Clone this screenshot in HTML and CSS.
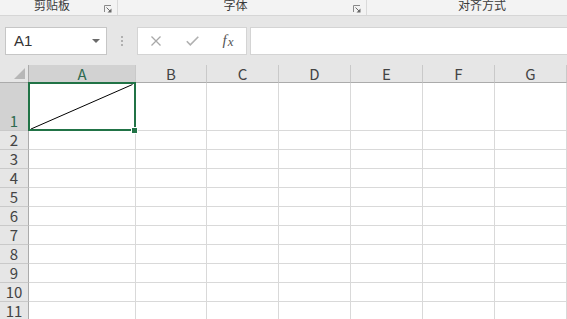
FILE: index.html
```html
<!DOCTYPE html>
<html lang="zh-CN">

<head>
    <meta charset="UTF-8">
    <meta name="viewport" content="width=device-width, initial-scale=1.0">
    <title>工作簿1 - Excel</title>
    <link rel="stylesheet" href="styles.css">
</head>

<body>
    <!-- Ribbon group labels (bottom of the ribbon) -->
    <div class="ribbon">
        <div class="group group-clip">
            <span class="group-label">剪贴板</span>
            <svg class="launcher" viewBox="0 0 8 8"><path d="M0.5 7V0.5H7" fill="none" stroke="#8a8a8a"/><path d="M2.5 2.5L6 6" stroke="#6a6a6a"/><path d="M7.5 3.5V7.5H3.5Z" fill="#6a6a6a"/></svg>
        </div>
        <div class="group group-font">
            <span class="group-label">字体</span>
            <svg class="launcher" viewBox="0 0 8 8"><path d="M0.5 7V0.5H7" fill="none" stroke="#8a8a8a"/><path d="M2.5 2.5L6 6" stroke="#6a6a6a"/><path d="M7.5 3.5V7.5H3.5Z" fill="#6a6a6a"/></svg>
        </div>
        <div class="group group-align">
            <span class="group-label">对齐方式</span>
        </div>
    </div>

    <!-- Name box + formula bar -->
    <div class="formula-bar">
        <div class="name-box">
            <span>A1</span>
            <svg class="drop" viewBox="0 0 8 4"><path d="M0 0H8L4 4Z" fill="#6a6a6a"/></svg>
        </div>
        <div class="grip">
            <svg viewBox="0 0 2 10" width="2" height="10"><rect x="0" y="0" width="2" height="2" fill="#b0b0b0"/><rect x="0" y="4" width="2" height="2" fill="#b0b0b0"/><rect x="0" y="8" width="2" height="2" fill="#b0b0b0"/></svg>
        </div>
        <div class="fx-buttons">
            <span class="fx-btn"><svg viewBox="0 0 10 10" width="10" height="10"><path d="M0.5 0.5L9.5 9.5M9.5 0.5L0.5 9.5" stroke="#a8a8a8" stroke-width="1.3"/></svg></span>
            <span class="fx-btn"><svg viewBox="0 0 13 10" width="13" height="10"><path d="M0.8 5.2L4.3 8.8L12.3 0.8" fill="none" stroke="#b0b0b0" stroke-width="1.6"/></svg></span>
            <span class="fx-btn fx-label"><i>f</i><i class="x">x</i></span>
        </div>
        <div class="formula-input"></div>
    </div>

    <!-- Worksheet -->
    <div class="sheet">
        <div class="row head-row">
            <div class="corner"><svg viewBox="0 0 11 11" width="11" height="11"><path d="M11 0V11H0Z" fill="#b7b7b7"/></svg></div>
            <div class="ch selected">A</div>
            <div class="ch">B</div>
            <div class="ch">C</div>
            <div class="ch">D</div>
            <div class="ch">E</div>
            <div class="ch">F</div>
            <div class="ch">G</div>
            <div class="ch">H</div>
        </div>
        <div class="row row-tall">
            <div class="rh selected">1</div>
            <div class="c active">
                <svg class="diag" viewBox="0 0 106 47" preserveAspectRatio="none"><line x1="2" y1="46" x2="103.5" y2="1.5" stroke="#000" stroke-width="1"/></svg>
                <div class="sel"><span class="handle"></span></div>
            </div>
            <div class="c"></div><div class="c"></div><div class="c"></div><div class="c"></div><div class="c"></div><div class="c"></div><div class="c"></div>
        </div>
        <div class="row"><div class="rh">2</div><div class="c"></div><div class="c"></div><div class="c"></div><div class="c"></div><div class="c"></div><div class="c"></div><div class="c"></div><div class="c"></div></div>
        <div class="row"><div class="rh">3</div><div class="c"></div><div class="c"></div><div class="c"></div><div class="c"></div><div class="c"></div><div class="c"></div><div class="c"></div><div class="c"></div></div>
        <div class="row"><div class="rh">4</div><div class="c"></div><div class="c"></div><div class="c"></div><div class="c"></div><div class="c"></div><div class="c"></div><div class="c"></div><div class="c"></div></div>
        <div class="row"><div class="rh">5</div><div class="c"></div><div class="c"></div><div class="c"></div><div class="c"></div><div class="c"></div><div class="c"></div><div class="c"></div><div class="c"></div></div>
        <div class="row"><div class="rh">6</div><div class="c"></div><div class="c"></div><div class="c"></div><div class="c"></div><div class="c"></div><div class="c"></div><div class="c"></div><div class="c"></div></div>
        <div class="row"><div class="rh">7</div><div class="c"></div><div class="c"></div><div class="c"></div><div class="c"></div><div class="c"></div><div class="c"></div><div class="c"></div><div class="c"></div></div>
        <div class="row"><div class="rh">8</div><div class="c"></div><div class="c"></div><div class="c"></div><div class="c"></div><div class="c"></div><div class="c"></div><div class="c"></div><div class="c"></div></div>
        <div class="row"><div class="rh">9</div><div class="c"></div><div class="c"></div><div class="c"></div><div class="c"></div><div class="c"></div><div class="c"></div><div class="c"></div><div class="c"></div></div>
        <div class="row"><div class="rh">10</div><div class="c"></div><div class="c"></div><div class="c"></div><div class="c"></div><div class="c"></div><div class="c"></div><div class="c"></div><div class="c"></div></div>
        <div class="row"><div class="rh">11</div><div class="c"></div><div class="c"></div><div class="c"></div><div class="c"></div><div class="c"></div><div class="c"></div><div class="c"></div><div class="c"></div></div>
        <div class="row"><div class="rh">12</div><div class="c"></div><div class="c"></div><div class="c"></div><div class="c"></div><div class="c"></div><div class="c"></div><div class="c"></div><div class="c"></div></div>
    </div>
</body>

</html>
```
FILE: styles.css
```css
* {
    box-sizing: border-box;
    margin: 0;
    padding: 0;
}

body {
    width: 567px;
    height: 319px;
    overflow: hidden;
    font-family: 'Noto Sans CJK SC', 'Liberation Sans', sans-serif;
    background-color: #fff;
    color: #444;
}

/* Ribbon */
.ribbon {
    display: flex;
    height: 16px;
    background-color: #f3f3f3;
    border-bottom: 1px solid #d6d6d6;
    overflow: hidden;
}

.group {
    display: flex;
    align-items: flex-start;
    flex-shrink: 0;
    border-right: 1px solid #dadada;
}

.group-clip {
    width: 118px;
}

.group-font {
    width: 249px;
}

.group-align {
    width: 230px;
    border-right: none;
}

.group-label {
    flex: 1;
    text-align: center;
    font-size: 12px;
    line-height: 9px;
    color: #3a3a3a;
}

.launcher {
    width: 8px;
    height: 8px;
    margin: 5px 5px 0 0;
}

/* Formula bar */
.formula-bar {
    display: flex;
    align-items: center;
    height: 49px;
    padding-left: 5px;
    background-color: #e6e6e6;
}

.name-box {
    display: flex;
    align-items: center;
    justify-content: space-between;
    width: 102px;
    height: 28px;
    padding: 0 6px 0 8px;
    background-color: #fff;
    border: 1px solid #c6c6c6;
    font-family: 'Liberation Sans', sans-serif;
    font-size: 15px;
    color: #333;
}

.drop {
    width: 8px;
    height: 4px;
}

.grip {
    display: flex;
    justify-content: center;
    width: 30px;
}

.fx-buttons {
    display: flex;
    align-items: center;
    width: 110px;
    height: 28px;
    background-color: #fff;
    border: 1px solid #d4d4d4;
}

.fx-btn {
    display: flex;
    align-items: center;
    justify-content: center;
    width: 36px;
    height: 26px;
}

.fx-label {
    font-family: 'Liberation Serif', serif;
    font-size: 15px;
    color: #555;
}

.fx-label .x {
    font-size: 13px;
    margin-left: 1px;
    margin-top: 3px;
}

.formula-input {
    flex: 1;
    height: 28px;
    margin-left: 3px;
    background-color: #fff;
    border: 1px solid #d4d4d4;
    border-right: none;
}

/* Sheet grid */
.row {
    display: grid;
    grid-template-columns: 29px 107px 71px 72px 72px 72px 72px 72px 72px;
    height: 19px;
}

.head-row {
    height: 18px;
}

.row-tall {
    height: 48px;
}

.c {
    border-right: 1px solid #d9d9d9;
    border-bottom: 1px solid #d9d9d9;
}

.corner {
    display: flex;
    align-items: flex-end;
    justify-content: flex-end;
    padding: 0 3px 3px 0;
    background-color: #e6e6e6;
    border-right: 1px solid #ababab;
    border-bottom: 1px solid #ababab;
}

.ch {
    text-align: center;
    font-size: 15px;
    line-height: 17px;
    background-color: #e6e6e6;
    border-right: 1px solid #c9c9c9;
    border-bottom: 1px solid #ababab;
}

.rh {
    display: flex;
    align-items: flex-end;
    justify-content: center;
    font-size: 15px;
    line-height: 18px;
    background-color: #e6e6e6;
    border-right: 1px solid #ababab;
    border-bottom: 1px solid #c9c9c9;
}

.ch.selected,
.rh.selected {
    background-color: #d2d2d2;
    color: #2f6a50;
}

/* Active cell A1 */
.active {
    position: relative;
}

.diag {
    position: absolute;
    left: 0;
    top: 0;
    width: 106px;
    height: 47px;
}

.sel {
    position: absolute;
    left: -1px;
    top: -1px;
    right: -1px;
    bottom: -1px;
    border: 2px solid #217346;
}

.handle {
    position: absolute;
    left: 101px;
    top: 43px;
    width: 7px;
    height: 7px;
    background-color: #217346;
    border: 1px solid #fff;
}
```
